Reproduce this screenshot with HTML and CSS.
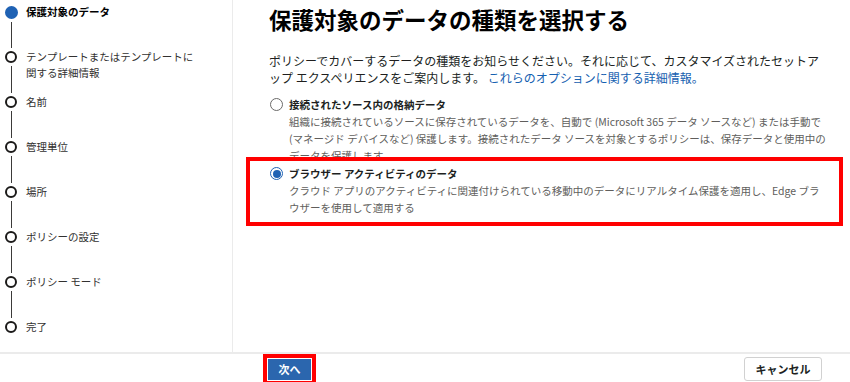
FILE: index.html
```html
<!doctype html>
<html lang="ja">
<head>
  <meta charset="utf-8">
  <title>保護対象のデータ</title>
  <meta name="viewport" content="width=device-width, initial-scale=1">
  <link rel="stylesheet" href="styles.css">
</head>
<body>
  <div class="wizard">
    <div class="layout">
      <nav class="steps">
        <div class="step current">
          <div class="rail"><span class="dot"></span><span class="line"></span></div>
          <div class="label">保護対象のデータ</div>
        </div>
        <div class="step">
          <div class="rail"><span class="dot"></span><span class="line"></span></div>
          <div class="label">テンプレートまたはテンプレートに<br>関する詳細情報</div>
        </div>
        <div class="step">
          <div class="rail"><span class="dot"></span><span class="line"></span></div>
          <div class="label">名前</div>
        </div>
        <div class="step">
          <div class="rail"><span class="dot"></span><span class="line"></span></div>
          <div class="label">管理単位</div>
        </div>
        <div class="step">
          <div class="rail"><span class="dot"></span><span class="line"></span></div>
          <div class="label">場所</div>
        </div>
        <div class="step">
          <div class="rail"><span class="dot"></span><span class="line"></span></div>
          <div class="label">ポリシーの設定</div>
        </div>
        <div class="step">
          <div class="rail"><span class="dot"></span><span class="line"></span></div>
          <div class="label">ポリシー モード</div>
        </div>
        <div class="step last">
          <div class="rail"><span class="dot"></span></div>
          <div class="label">完了</div>
        </div>
      </nav>

      <main class="content">
        <h1>保護対象のデータの種類を選択する</h1>
        <p class="intro">ポリシーでカバーするデータの種類をお知らせください。それに応じて、カスタマイズされたセットアップ エクスペリエンスをご案内します。 <a href="#">これらのオプションに関する詳細情報。</a></p>

        <div class="option">
          <span class="radio"></span>
          <div class="option-text">
            <div class="option-title">接続されたソース内の格納データ</div>
            <div class="option-desc">組織に接続されているソースに保存されているデータを、自動で (Microsoft 365 データ ソースなど) または手動で (マネージド デバイスなど) 保護します。接続されたデータ ソースを対象とするポリシーは、保存データと使用中のデータを保護します。</div>
          </div>
        </div>

        <div class="option highlight">
          <span class="radio checked"></span>
          <div class="option-text">
            <div class="option-title">ブラウザー アクティビティのデータ</div>
            <div class="option-desc">クラウド アプリのアクティビティに関連付けられている移動中のデータにリアルタイム保護を適用し、Edge ブラウザーを使用して適用する</div>
          </div>
        </div>
      </main>
    </div>

    <footer class="footer">
      <button class="btn primary">次へ</button>
      <button class="btn">キャンセル</button>
    </footer>
  </div>
</body>
</html>
```

FILE: styles.css
```css
:root {
  --text: #201f1e;
  --muted: #605e5c;
  --blue: #1f62b4;
  --link: #1560b0;
  --divider: #ebebeb;
  --mark: #ff0000;
}
* { box-sizing: border-box; }
body {
  margin: 0;
  background: #fff;
  color: var(--text);
  font-family: "Noto Sans CJK JP", "Noto Sans", sans-serif;
}
.wizard { width: 850px; height: 382px; display: flex; flex-direction: column; overflow: hidden; }
.layout { display: flex; height: 352px; flex: none; }

/* left step list */
.steps {
  width: 233px;
  flex: none;
  border-right: 1px solid var(--divider);
  padding: 6px 0 0 5px;
}
.step { display: flex; height: 45px; }
.rail { width: 12px; display: flex; flex-direction: column; align-items: center; flex: none; }
.dot {
  width: 12px; height: 12px;
  border: 2px solid #1b1a19;
  border-radius: 50%;
  flex: none;
}
.current .dot { background: var(--blue); border-color: var(--blue); width: 13px; height: 13px; }
.line { width: 1px; background: #3b3a39; flex: 1; margin: 3px 0; }
.label {
  margin-left: 9px;
  margin-top: -2px;
  font-size: 10.5px;
  line-height: 16px;
  color: #323130;
}
.current .label { font-weight: 700; color: #000; }

/* main content */
.content { flex: 1; padding: 4px 24px 0 36px; }
h1 {
  margin: 0;
  font-size: 22.5px;
  line-height: 30px;
  font-weight: 700;
  color: #000;
}
.intro {
  margin: 18px 0 0;
  font-size: 12px;
  line-height: 17px;
}
a { color: var(--link); text-decoration: none; }

.option { display: flex; gap: 6px; margin-top: 10px; position: relative; }
.option + .option { margin-top: 1px; }
.radio {
  width: 13px; height: 13px;
  margin: 2px 0 0 1px;
  border: 1px solid #6b6a69;
  border-radius: 50%;
  flex: none;
  display: flex; align-items: center; justify-content: center;
}
.radio.checked { border-color: var(--blue); }
.radio.checked::after {
  content: "";
  width: 8px; height: 8px;
  border-radius: 50%;
  background: var(--blue);
}
.option-title { font-size: 10.5px; line-height: 17px; font-weight: 700; }
.option-desc { font-size: 10.5px; line-height: 17px; color: var(--muted); }

/* red annotation frame */
.highlight::before {
  content: "";
  position: absolute;
  left: -23px; top: -8px; right: -17px; bottom: -10px;
  border: 4px solid var(--mark);
}

/* footer */
.footer {
  border-top: 2px solid var(--divider);
  flex: 1;
  display: flex;
  align-items: center;
  justify-content: space-between;
  padding: 2px 28px 0 268px;
}
.btn {
  font-family: inherit;
  font-size: 11px;
  font-weight: 700;
  height: 24px;
  width: 78px;
  padding: 0;
  background: #fff;
  border: 1px solid #d1d1d1;
  border-radius: 3px;
  color: var(--text);
}
.btn.primary {
  width: 43px; height: 21px;
  background: #2b66ae;
  border: none;
  border-radius: 0;
  color: #fff;
  outline: 4px solid var(--mark);
  outline-offset: 1px;
}
```
